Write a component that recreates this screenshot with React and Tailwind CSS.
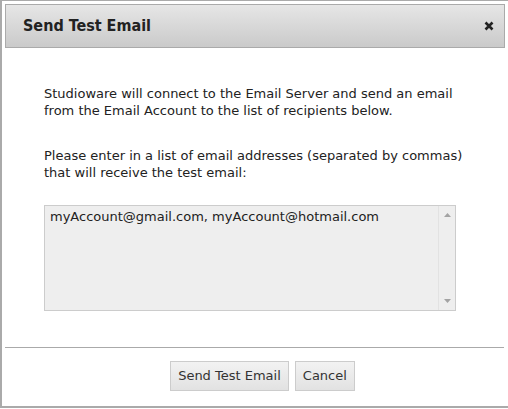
import React from 'react';

const font = { fontFamily: '"DejaVu Sans", sans-serif' };
const titleFont = { fontFamily: '"DejaVu Sans Condensed", "DejaVu Sans", sans-serif' };

export default function App() {
  return (
    <div className="w-[508px] h-[409px] bg-white" style={font}>
      <div className="h-[408px] border-l-2 border-t border-b-2 border-[#aaaaaa] pl-[3px] pr-[3px] pt-[3px] flex flex-col">
        <div className="h-[44px] border border-[#aaaaaa] bg-gradient-to-b from-[#e6e6e6] to-[#cacaca] flex items-center justify-between pl-[17px] pr-[10px]">
          <span className="text-[16px] font-bold text-[#222222]" style={titleFont}>Send Test Email</span>
          <svg width="10" height="10" viewBox="0 0 10 10">
            <path d="M1.5 1.5 L8.5 8.5 M8.5 1.5 L1.5 8.5" stroke="#222" strokeWidth="2.6" strokeLinecap="butt" />
          </svg>
        </div>
        <div className="flex-1 pl-[39px] pr-[36px] pt-[37px] text-[13px] leading-[17px] text-[#222222]">
          <p>Studioware will connect to the Email Server and send an email from the Email Account to the list of recipients below.</p>
          <p className="mt-[28px]">Please enter in a list of email addresses (separated by commas) that will receive the test email:</p>
          <div className="mt-[24px] mr-[13px] h-[106px] border border-[#cccccc] bg-[#eeeeee] flex">
            <div className="flex-1 px-[5px] pt-[2px]">myAccount@gmail.com, myAccount@hotmail.com</div>
            <div className="w-[17px] border-l border-[#e2e2e2] flex flex-col items-center justify-between py-[7px]">
              <svg width="7" height="4" viewBox="0 0 7 4"><path d="M3.5 0 L7 4 L0 4 Z" fill="#a3a3a3" /></svg>
              <svg width="7" height="4" viewBox="0 0 7 4"><path d="M0 0 L7 0 L3.5 4 Z" fill="#a3a3a3" /></svg>
            </div>
          </div>
        </div>
        <div className="border-t border-[#aaaaaa] mr-[1px] h-[59px] flex items-center justify-center gap-[6px] pl-[16px] pb-[2px]">
          <button className="h-[30px] px-[7px] border border-[#cccccc] bg-gradient-to-b from-[#f2f2f2] to-[#e2e2e2] text-[13px] text-[#333333]">Send Test Email</button>
          <button className="h-[30px] px-[7px] border border-[#cccccc] bg-gradient-to-b from-[#f2f2f2] to-[#e2e2e2] text-[13px] text-[#333333]">Cancel</button>
        </div>
      </div>
    </div>
  );
}
